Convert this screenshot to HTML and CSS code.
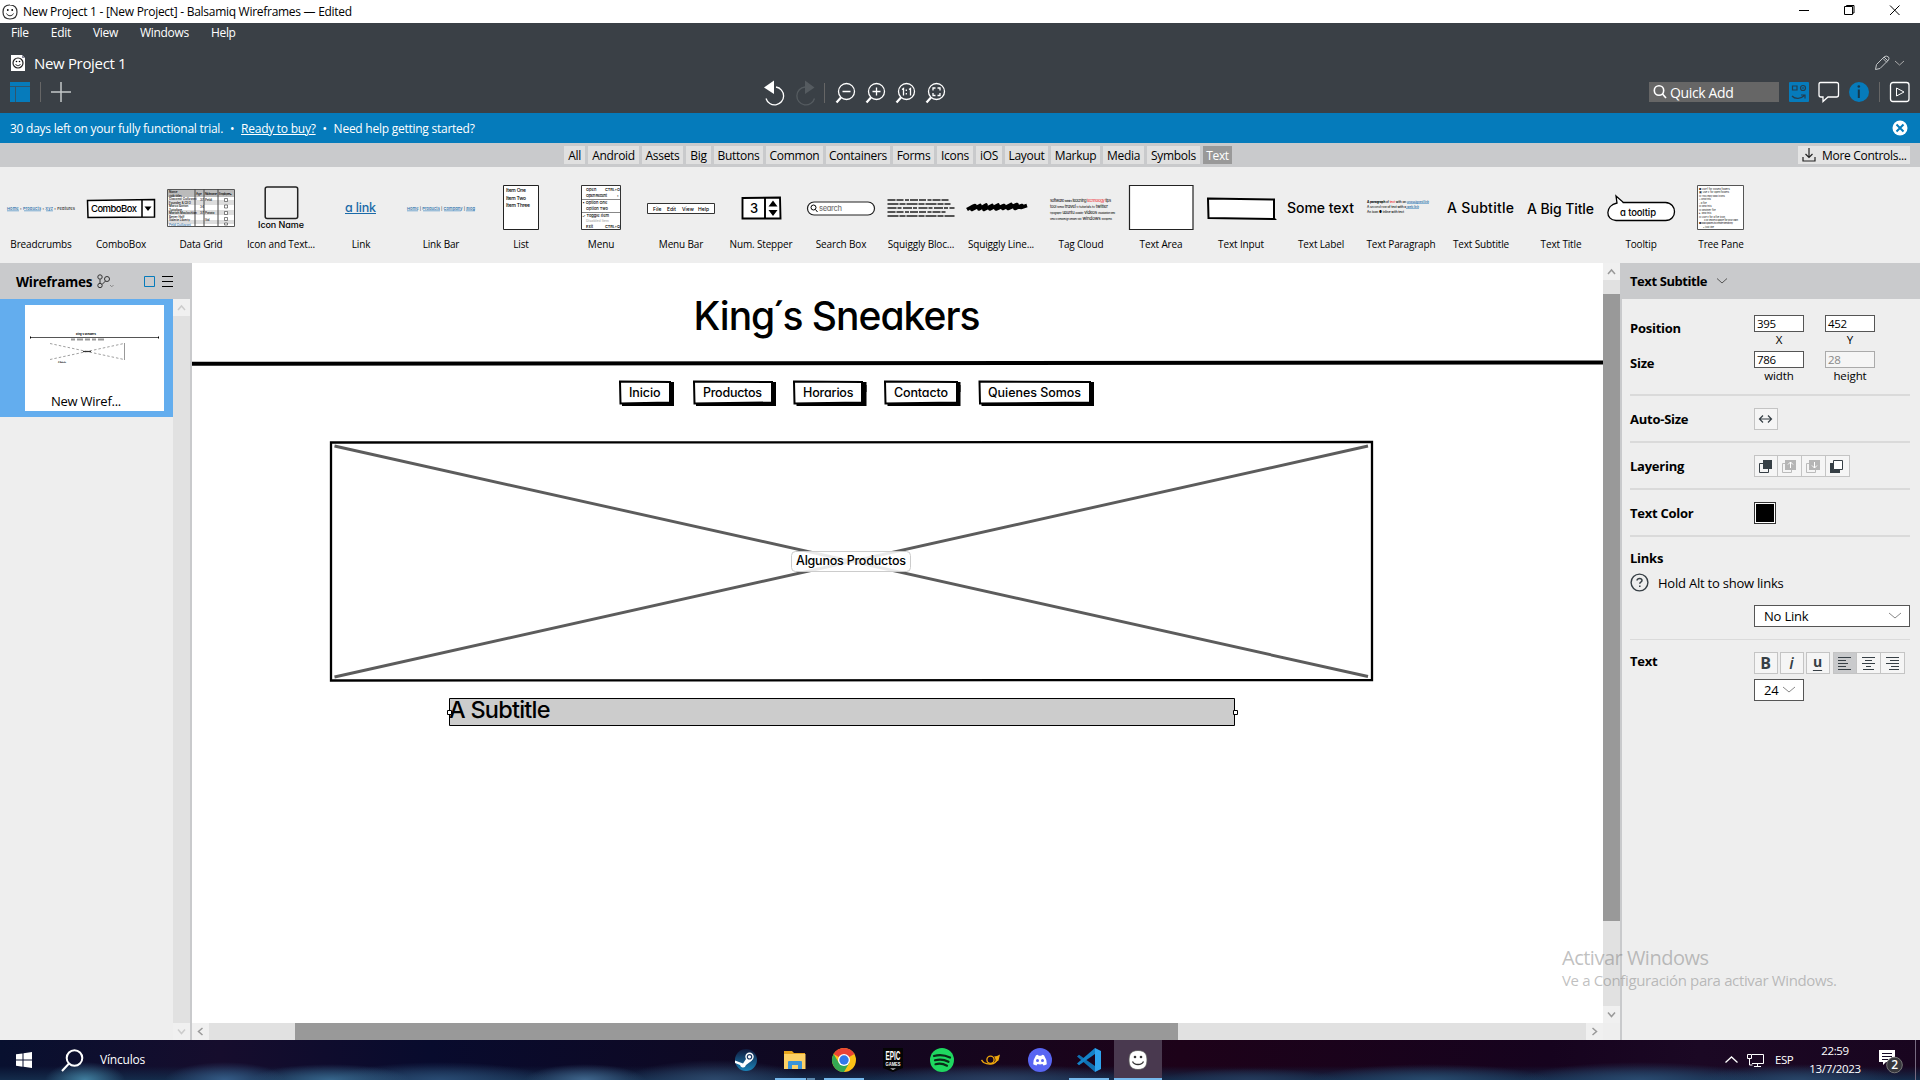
FILE: index.html
```html
<!DOCTYPE html>
<html lang="en">
<head>
<meta charset="utf-8">
<title>New Project 1 - Balsamiq Wireframes</title>
<link rel="stylesheet" href="styles.css">
</head>
<body>
<div class="app">
  <header class="titlebar">
    <svg class="logo" width="16" height="16" viewBox="0 0 16 16"><path d="M8 1C3 .8 1 4 1 8s2 7 7 7 7-3 7-7-2-7-7-7z" fill="#fff" stroke="#333" stroke-width="1.2"/><path d="M4.500 9.500c1.500 3 5.500 3 7 0" fill="none" stroke="#333" stroke-width="1"/><circle cx="5.800" cy="6" r=".9"/><circle cx="10.200" cy="6" r=".9"/></svg>
    <span class="title-text">New Project 1 - [New Project] - Balsamiq Wireframes — Edited</span>
    <svg class="winctl" width="120" height="23" viewBox="0 0 120 23" fill="none" stroke="#000"><path d="M10 10.500h10M55.500 6.500h8v8h-8zM57.500 6V5.500h7.500v7.500H63.500M101 5.500l9.500 9.500M110.500 5.500L101 15"/></svg>
  </header>

  <div class="dark">
    <nav class="menubar"><span>File</span><span>Edit</span><span>View</span><span>Windows</span><span>Help</span></nav>
    <div class="project">
      <svg width="16" height="18" viewBox="0 0 16 18"><path d="M1 1h11l3 3v13H1z" fill="#fff"/><path d="M12 1v3h3z" fill="#889"/><circle cx="8" cy="9" r="5" fill="none" stroke="#222" stroke-width="1.2"/><path d="M5.500 10c1 2.200 4 2.200 5 0" fill="none" stroke="#222"/><circle cx="6.500" cy="7.500" r=".8"/><circle cx="9.500" cy="7.500" r=".8"/></svg>
      <span class="project-name">New Project 1</span>
      <svg class="pencil" width="32" height="18" viewBox="0 0 32 18" fill="none" stroke="#c4c7c9"><path d="M1.500 15.500l1-5 8-8q2-1 4 .5 1 1.500 0 3l-8.500 8.500zM10 3l4 4M9 4.500l3.800 3.800"/><path d="M21 7l4.500 4L30 7" stroke="#aaa"/></svg>
    </div>
    <div class="toolbar">
      <div class="tool-left">
        <svg width="62" height="22" viewBox="0 0 62 22"><path d="M0 1h20v20H0z" fill="#067bbb"/><path d="M0 5.500h20M5.500 5.500V21" stroke="#31556b"/><path d="M30.500 1v20" stroke="#666"/><path d="M41 11h20M51 1v20" stroke="#c4c7c9" stroke-width="1.500"/></svg>
      </div>
      <div class="tool-mid">
        <svg width="184" height="28" viewBox="0 0 184 28" fill="none" stroke="#fff" stroke-width="1.300">
          <path d="M12 7a9 9 0 1 1-10 11.500"/><path d="M0 7.500L10 .5V14z" fill="#fff" stroke="none"/>
          <g stroke="#555b60"><path d="M41 7a9 9 0 1 0 9.500 11.500"/><path d="M50.500 7.500L41 .5V14z" fill="#555b60" stroke="none"/></g>
          <path d="M60.500 3v20" stroke="#666" stroke-width="1"/>
          <g><circle cx="82.500" cy="11.500" r="8"/><path d="M77 17.500l-4.500 5" stroke-width="2.200"/></g>
          <g><circle cx="112.500" cy="11.500" r="8"/><path d="M107 17.500l-4.500 5" stroke-width="2.200"/></g>
          <g><circle cx="142.500" cy="11.500" r="8"/><path d="M137 17.500l-4.500 5" stroke-width="2.200"/></g>
          <g><circle cx="172.500" cy="11.500" r="8"/><path d="M167 17.500l-4.500 5" stroke-width="2.200"/></g>
          <path d="M78.500 11.500h8M108.500 11.500h8M112.500 7.500v8"/>
          <path d="M138 9.500l1.500-1v7M145 9.500l1.500-1v7M142.300 9.500v1.500M142.300 13v1.500"/>
          <path d="M171.500 8h-2.500v2.500M169 13v2.500h2.500M173.500 8h2.500v2.500M176 13v2.500h-2.500"/>
        </svg>
      </div>
      <div class="tool-right">
        <div class="quick"><svg width="14" height="14" viewBox="0 0 14 14" fill="none" stroke="#fff" stroke-width="1.600"><circle cx="6" cy="5.500" r="4.700"/><path d="M9.500 9l3.500 4"/></svg><span>Quick Add</span></div>
        <svg width="124" height="22" viewBox="0 0 124 22" fill="none" stroke="#fff">
          <rect x="1" y="1" width="20" height="20" rx="1" fill="#067bbb" stroke="none"/><g stroke="#243f50" stroke-width="1.200"><path d="M4.500 5h4.500v4h-4.500z"/><circle cx="15" cy="7" r="2.500"/><path d="M14 7h2M4 15c3 3.500 9 3 13-1M13 14h4v3.500"/></g>
          <path d="M32.500 1.500h16q2 0 2 2V14q0 2-2 2H40l-5 4.500V16h-2q-2 0-2-2V3.500q0-2 1.500-2z" stroke-width="1.300"/>
          <circle cx="71" cy="11" r="10" fill="#067bbb" stroke="none"/><path d="M70.800 8.500v8.500" stroke="#16384c" stroke-width="2"/><circle cx="70.800" cy="5.500" r="1.300" fill="#16384c" stroke="none"/>
          <path d="M91.500 1v20" stroke="#666"/><rect x="102.500" y="1.500" width="18.500" height="19" rx="2.500" stroke-width="1.300"/><path d="M108.500 7l7.500 4-7.500 4z"/>
        </svg>
      </div>
    </div>
  </div>

  <div class="trial">
    <span>30 days left on your fully functional trial.</span><span class="bul">•</span><span class="buy">Ready to buy?</span><span class="bul">•</span><span>Need help getting started?</span>
    <svg class="close" width="16" height="16" viewBox="0 0 16 16"><circle cx="8" cy="8" r="7.500" fill="#fff"/><path d="M4.500 4.500l7 7M11.500 4.500l-7 7" stroke="#067bbb" stroke-width="2"/></svg>
  </div>

  <div class="tabs">
    <div class="tablist"><span>All</span><span>Android</span><span>Assets</span><span>Big</span><span>Buttons</span><span>Common</span><span>Containers</span><span>Forms</span><span>Icons</span><span>iOS</span><span>Layout</span><span>Markup</span><span>Media</span><span>Symbols</span><span class="on">Text</span></div>
    <div class="more"><svg width="14" height="14" viewBox="0 0 14 14" fill="none" stroke="#222" stroke-width="1.200"><path d="M1 9v4h12V9M7 0v9M3.500 6L7 9.500 10.500 6"/></svg><span>More Controls...</span></div>
  </div>

  <div class="palette">
    <figure><svg viewBox="0 0 80 70" class="hand"><text x="6" y="42.500" font-size="4" textLength="68" class="bl">Home <tspan fill="#333">›</tspan> Products <tspan fill="#333">›</tspan> Xyz <tspan fill="#222">› Features</tspan></text><path d="M6 43.800h12M23 43.800h17M45 43.800h7" stroke="#2a7ab8" stroke-width=".6"/></svg><figcaption>Breadcrumbs</figcaption></figure>
    <figure><svg viewBox="0 0 80 70" class="hand"><path d="M6.500 33.500L73.500 32.500V50L7 50.500zM61 33v17" fill="#fff" stroke="#000" stroke-width="1.500"/><path d="M63.500 39.500h7l-3.500 4.500z"/><text x="10" y="44.500" font-size="9.500" textLength="46">ComboBox</text></svg><figcaption>ComboBox</figcaption></figure>
    <figure><svg viewBox="0 0 80 70" class="hand"><path d="M6.500 22.500h67v37h-67z" fill="#fff" stroke="#555"/><path d="M7 33h66v5H7zM7 43h66v5H7zM7 53h66v4H7z" fill="#ddd"/><path d="M7 23h66v7H7z" fill="#bbb"/><path d="M34 22v37M43 22v37M57 22v37" stroke="#444"/><g font-size="3"><text x="8" y="26">Name</text><text x="8" y="29.500">(job title)</text><text x="8" y="33">Giacomo Guilizzoni</text><text x="8" y="36.500">Founder &amp; CEO</text><text x="8" y="40">Marco Botton</text><text x="8" y="43.500">Tuttofare</text><text x="8" y="47">Mariah Maclachlan</text><text x="8" y="50.500">Better Half</text><text x="8" y="54">Valerie Liberty</text><text x="8" y="58.500" class="bl">Peldi Guilizzoni</text><text x="35" y="28">Age</text><text x="44" y="28" textLength="12">Nickname</text><text x="58" y="28" textLength="13">Employee▴</text><text x="39" y="34">37</text><text x="44" y="34">Peldi</text><text x="39" y="40.500">34</text><text x="39" y="47">37</text><text x="44" y="47">Patata</text><text x="44" y="53.500">Val</text></g><path d="M63.500 31.500h3v3h-3zM63.500 38h3v3h-3zM63.500 44.500h3v3h-3zM63.500 50.500h3v3h-3zM63.500 56h3v2h-3z" fill="#fff" stroke="#333" stroke-width=".6"/></svg><figcaption>Data Grid</figcaption></figure>
    <figure><svg viewBox="0 0 80 70" class="hand"><rect x="24.200" y="20" width="32.500" height="31.500" rx="2" fill="#f0f0f0" stroke="#222" stroke-width="1.500"/><text x="17" y="61" font-size="9" textLength="46">Icon Name</text></svg><figcaption>Icon and Text...</figcaption></figure>
    <figure><svg viewBox="0 0 80 70" class="hand"><text x="24" y="44.500" font-size="12.500" textLength="31" class="bl">a link</text><path d="M24 46.500h31" stroke="#1a6aa8"/></svg><figcaption>Link</figcaption></figure>
    <figure><svg viewBox="0 0 80 70" class="hand"><text x="6" y="42.500" font-size="4" textLength="68" class="bl">Home <tspan fill="#333">|</tspan> Products <tspan fill="#333">|</tspan> Company <tspan fill="#333">|</tspan> Blog</text><path d="M6 43.800h11M22 43.800h17M43 43.800h17M65 43.800h9" stroke="#2a7ab8" stroke-width=".6"/></svg><figcaption>Link Bar</figcaption></figure>
    <figure><svg viewBox="0 0 80 70" class="hand"><path d="M22.500 18.500h35v44h-35z" fill="#fff" stroke="#222"/><g font-size="5"><text x="25" y="25" textLength="20">Item One</text><text x="25" y="32.500" textLength="20">Item Two</text><text x="25" y="40" textLength="24">Item Three</text></g></svg><figcaption>List</figcaption></figure>
    <figure><svg viewBox="0 0 80 70" class="hand"><path d="M20.500 18.500h39v44h-39z" fill="#fff" stroke="#333"/><path d="M21 32.500h38M21 45.500h38" stroke="#888"/><g font-size="4"><text x="25" y="24">Open</text><text x="44" y="24" textLength="15">CTRL+O</text><text x="25" y="30" textLength="21">Open Recent</text><text x="56" y="30">›</text><text x="21.500" y="37">• Option One</text><text x="25" y="42.500">Option Two</text><text x="21" y="50">✓ Toggle Item</text><text x="25" y="55" fill="#aaa" font-size="3.500">Disabled Item</text><text x="25" y="61">Exit</text><text x="44" y="61" textLength="15">CTRL+Q</text></g></svg><figcaption>Menu</figcaption></figure>
    <figure><svg viewBox="0 0 80 70" class="hand"><path d="M6.500 36.500h67v10h-67z" fill="#fff" stroke="#333"/><g font-size="5"><text x="12" y="43.500">File</text><text x="26" y="43.500">Edit</text><text x="41" y="43.500">View</text><text x="57" y="43.500">Help</text></g></svg><figcaption>Menu Bar</figcaption></figure>
    <figure><svg viewBox="0 0 80 70" class="hand"><path d="M21.500 31L59 30.500 59.500 51.500 21.500 51.500zM44 31v21" fill="#fff" stroke="#000" stroke-width="1.900"/><path d="M47.500 39.500h9l-4.500-6zM47.500 43h9l-4.500 6z"/><text x="29" y="46" font-size="13">3</text></svg><figcaption>Num. Stepper</figcaption></figure>
    <figure><svg viewBox="0 0 80 70" class="hand"><rect x="6.500" y="35" width="67" height="13" rx="6.500" fill="#fff" stroke="#222" stroke-width="1.200"/><circle cx="12.500" cy="40.500" r="2.500" fill="none" stroke="#000"/><path d="M14.500 42.500l2 2.500" stroke="#000"/><text x="18" y="44" font-size="7.500" textLength="23" fill="#777">search</text></svg><figcaption>Search Box</figcaption></figure>
    <figure><svg viewBox="0 0 80 70" class="hand"><path d="M6.500 33h61" class="sq"/><path d="M6.500 37h63" class="sq s2"/><path d="M6.500 41h67" class="sq s3"/><path d="M6.500 45h58" class="sq"/><path d="M6.500 49h67" class="sq s2"/></svg><figcaption>Squiggly Bloc...</figcaption></figure>
    <figure><svg viewBox="0 0 80 70"><path d="M6 42.500q7-4 8-4l-3 4 8-4-1 3.500 7-4-2 4.500 8-4-2 3.500 8-4-2 4 8-3.500-1 3 8-4-3 4 9-4-2 4 7-3-1 2 6-2" fill="none" stroke="#000" stroke-width="3.600" stroke-linejoin="round"/></svg><figcaption>Squiggly Line...</figcaption></figure>
    <figure><svg viewBox="0 0 80 70" class="hand tags"><g font-size="4"><text x="9" y="35" textLength="61">software <tspan font-size="2.500">statistics</tspan> teaching <tspan fill="#e22">technology</tspan> tips</text><text x="9" y="41" textLength="58">tool <tspan font-size="2.500">toread</tspan> <tspan font-size="4.500">travel</tspan> <tspan font-size="2.500">tv</tspan> <tspan font-size="3.500">tutorials tv</tspan> <tspan font-size="4.500">twitter</tspan></text><text x="9" y="47" textLength="65"><tspan font-size="2.500">typography</tspan> ubuntu <tspan font-size="2.500">usability</tspan> <tspan font-size="4.500">videos</tspan> <tspan font-size="2.500">visualization web</tspan></text><text x="9" y="52.500" textLength="62"><tspan font-size="2.300">web2.0 webdesign webdev wiki</tspan> <tspan font-size="4.500">windows</tspan> <tspan font-size="2.300">wordpress</tspan></text></g></svg><figcaption>Tag Cloud</figcaption></figure>
    <figure><svg viewBox="0 0 80 70"><path d="M8.500 18.500h63.500v44H8.500z" fill="#fff" stroke="#222" stroke-width="1.200"/></svg><figcaption>Text Area</figcaption></figure>
    <figure><svg viewBox="0 0 80 70"><path d="M7 31.500l66 1v19l.5.500-66-1z" fill="#fff" stroke="#000" stroke-width="2"/></svg><figcaption>Text Input</figcaption></figure>
    <figure><svg viewBox="0 0 80 70" class="hand"><text x="6" y="45.500" font-size="14" textLength="67">Some text</text></svg><figcaption>Text Label</figcaption></figure>
    <figure><svg viewBox="0 0 80 70" class="hand"><g font-size="3.200"><text x="6" y="35.500" textLength="62"><tspan font-weight="700">A paragraph</tspan> of <tspan fill="#e22">text</tspan> with an <tspan class="bl">unassigned link</tspan></text><text x="6" y="40.500" textLength="52">A <tspan font-style="italic">second row</tspan> of text with a <tspan class="bl">web link</tspan></text><text x="6" y="45.500" textLength="37">An icon ● inline with text</text></g><path d="M46 36.500h22M45 41.500h13" stroke="#2a7ab8" stroke-width=".5"/></svg><figcaption>Text Paragraph</figcaption></figure>
    <figure><svg viewBox="0 0 80 70" class="hand"><text x="6" y="46" font-size="14" textLength="67">A Subtitle</text></svg><figcaption>Text Subtitle</figcaption></figure>
    <figure><svg viewBox="0 0 80 70" class="hand"><text x="6" y="46.500" font-size="14" textLength="67">A Big Title</text></svg><figcaption>Text Title</figcaption></figure>
    <figure><svg viewBox="0 0 80 70" class="hand"><path d="M15 29l7.500 6.500q-2 0 4 0h38c12 .5 12 18 0 18H15c-11-.5-11-15 1-17.500z" fill="#fff" stroke="#000" stroke-width="1.300"/><text x="19" y="48.500" font-size="9.500" textLength="36">a tooltip</text></svg><figcaption>Tooltip</figcaption></figure>
    <figure><svg viewBox="0 0 80 70" class="hand"><path d="M16.500 18.500h46v44H16.500z" fill="#fff" stroke="#555"/><g font-size="2.500" fill="#333"><text x="18" y="22.500">■ Use f for closed folders</text><text x="18" y="26">▣ Use F for open folders</text><text x="18" y="29.500">□ You may add icons</text><text x="18" y="33">+ and this</text><text x="18" y="36.500">- a file</text><text x="18" y="40">□ and this</text><text x="18" y="43.500">□ another file</text><text x="18" y="47">▸ and this</text><text x="18" y="50.500">□ Use v for a file icon</text><text x="23" y="54" textLength="34">x Or leave a space for your own</text><text x="18" y="57.300" textLength="34">■ add spaces to create hierarchy</text><text x="22" y="60.500">▪ just like</text></g></svg><figcaption>Tree Pane</figcaption></figure>
  </div>

  <main class="main">
    <aside class="left">
      <div class="phead"><b>Wireframes</b>
        <svg width="18" height="15" viewBox="0 0 18 15" fill="none" stroke="#333"><circle cx="3" cy="3" r="2.200"/><circle cx="10" cy="5" r="2.500"/><circle cx="3" cy="11.500" r="2.200"/><path d="M3 5.500v3.500M5 10.500l3.500-3.500"/><path d="M13 11l1.800 1.800L16.500 11" stroke="#888"/></svg>
        <svg class="views" width="30" height="13" viewBox="0 0 30 13" fill="none"><path d="M1.500 1.500h10v10h-10z" stroke="#067bbb"/><path d="M19 1.500h11M19 6.500h11M19 11.500h11" stroke="#000"/></svg>
      </div>
      <div class="lbody">
        <div class="list"><div class="sel"><div class="thumb">
          <svg width="139" height="86" viewBox="0 0 139 86"><text x="51" y="30.300" font-size="2.600" textLength="20" class="tiny">King´s Sneakers</text><path d="M5 32.500h129" stroke="#555"/><path d="M5 31.500h1v2H5zM133 31.500h1v2h-1z"/><path d="M46 34.500h33" stroke="#999" stroke-width="2" stroke-dasharray="4 2 6 2 5 2"/><path d="M25 38.500l74 16M25 54.500l74-16" stroke="#888" stroke-width=".8" stroke-dasharray="2.500 2"/><path d="M99.500 38v17" stroke="#999"/><path d="M58 46.500h8" stroke="#333" stroke-width="1.200"/><text x="33" y="58.300" font-size="1.800" textLength="8" class="tiny">A Subtitle</text></svg>
          <span>New Wiref...</span></div></div></div>
        <div class="vs dim"><svg class="b" viewBox="0 0 17 17"><path d="M5 11l3.500-4L12 11"/></svg><i class="grow"></i><svg class="b" viewBox="0 0 17 17"><path d="M5 6.500l3.500 4 3.500-4"/></svg></div>
      </div>
    </aside>

    <section class="center">
      <div class="crow">
        <div class="canvas">
          <svg width="1411" height="760" viewBox="192 263 1411 760" class="hand">
            <text x="693.500" y="330" font-size="39" textLength="287" class="ttl">King<tspan dx="-2">´</tspan><tspan dx="-2">s</tspan> Sneakers</text>
            <path d="M192 363.800L1603 362.500" stroke="#000" stroke-width="4"/>
            <g fill="#000">
              <path d="M622 385h52v21H622zM696 385h80v21H696zM796.500 385h70v21h-70zM887.500 385h73v21h-73zM981.500 385H1094v21H981.500z"/>
              <path d="M670 382h4v10H670zM772 382h4v10H772zM862 382h4.500v10h-4.500zM956 382h4.500v10h-4.500zM1089 382h5v10h-5z"/>
            </g>
            <g fill="#fff" stroke="#000" stroke-width="2">
              <path d="M620 381.500L670 382V402.500L620.500 403.500zM694 381.500L772 382V402.500L694.500 403.500zM794 381.500L862 382V402.500L794.500 403.500zM885 381.500L957 382V402.500L885.500 403.500zM979.500 381.500L1090 382V402.500L980 403.500z"/>
            </g>
            <g font-size="12.500"><text x="629" y="397" textLength="31.500">Inicio</text><text x="703" y="397" textLength="59">Productos</text><text x="803" y="397" textLength="50.500">Horarios</text><text x="894" y="397" textLength="54">Contacto</text><text x="988" y="397" textLength="93">Quienes Somos</text></g>
            <path d="M331 442.500L1372 442V680L331 680.500z" fill="#fff" stroke="#000" stroke-width="2.300"/>
            <path d="M334.500 446L1368 676.500M334.500 677L1368 446" stroke="#5c5c5c" stroke-width="2.900"/>
            <rect x="791.500" y="551.500" width="119" height="20" rx="4" fill="#fff" fill-opacity=".87" stroke="#ccc"/>
            <text x="796" y="565" font-size="12.500" textLength="110" class="nofeat">Algunos Productos</text>
            <path d="M449.500 698.500h785v27h-785z" fill="#ccc" stroke="#000"/>
            <text x="449" y="717.500" font-size="23.500" textLength="101.500" class="nofeat">A Subtitle</text>
            <path d="M447.500 710.500h4v4h-4zM1233.500 710.500h4v4h-4z" fill="#fff" stroke="#000"/>
          </svg>
        </div>
        <div class="vs"><svg class="b" viewBox="0 0 17 17"><path d="M5 11l3.500-4L12 11"/></svg><i class="vpre"></i><i class="vthumb"></i><i class="grow"></i><svg class="b" viewBox="0 0 17 17"><path d="M5 6.500l3.500 4 3.500-4"/></svg></div>
      </div>
      <div class="hs"><svg class="b" viewBox="0 0 17 17"><path d="M10.500 5l-4 3.500 4 3.500"/></svg><i class="hpre"></i><i class="hthumb"></i><i class="grow"></i><svg class="b" viewBox="0 0 17 17"><path d="M6.500 5l4 3.500-4 3.500"/></svg><i class="corner"></i></div>
    </section>

    <aside class="right">
      <div class="phead"><b>Text Subtitle</b><svg width="12" height="8" viewBox="0 0 12 8"><path d="M1 1.500l5 4.500 5-4.500" fill="none" stroke="#555"/></svg></div>
      <div class="props">
        <div class="sec pos">
          <b>Position</b><label><span class="in">395</span>X</label><label><span class="in">452</span>Y</label>
          <b>Size</b><label><span class="in">786</span>width</label><label><span class="in off">28</span>height</label>
        </div>
        <div class="sec row"><b>Auto-Size</b><div class="btns"><span><svg viewBox="0 0 22 20"><path d="M4.500 10h12M8 6.500L4.500 10 8 13.500M13 6.500l3.500 3.500-3.500 3.500" fill="none" stroke="#363f45" stroke-width="1.200"/></svg></span></div></div>
        <div class="sec row"><b>Layering</b><div class="btns joined">
          <span><svg viewBox="0 0 22 20"><path d="M4.500 7.500h9v9h-9z" fill="none" stroke="#363f45"/><path d="M8 4h9v9H8z" fill="#363f45"/></svg></span>
          <span><svg viewBox="0 0 22 20"><path d="M4.500 7.500h9v9h-9z" fill="none" stroke="#bbb"/><path d="M7 4h11v10H7z" fill="#b5b5b5"/><path d="M12.500 12V6M10 8.500L12.500 6 15 8.500" fill="none" stroke="#fff"/></svg></span>
          <span><svg viewBox="0 0 22 20"><path d="M4.500 7.500h9v9h-9z" fill="none" stroke="#bbb"/><path d="M7 4h11v10H7z" fill="#b5b5b5"/><path d="M12.500 6v6M10 9.500l2.500 2.500L15 9.500" fill="none" stroke="#fff"/></svg></span>
          <span><svg viewBox="0 0 22 20"><path d="M4 7h10v10H4z" fill="#363f45"/><path d="M7.500 4.500h9v9h-9z" fill="#fff" stroke="#363f45"/></svg></span></div></div>
        <div class="sec row"><b>Text Color</b><span class="swatch"></span></div>
        <div class="sec links">
          <b>Links</b>
          <div class="hint"><svg width="19" height="19" viewBox="0 0 19 19"><circle cx="9.500" cy="9.500" r="8.400" fill="none" stroke="#363f45" stroke-width="1.400"/><path d="M7 7.500q.3-2 2.600-2T12 7.300q0 1.200-1.200 1.800-1 .6-1 1.700M9.800 12.400v1.600" fill="none" stroke="#363f45" stroke-width="1.500"/></svg><span>Hold Alt to show links</span></div>
          <div class="select wide"><span>No Link</span><svg width="14" height="8" viewBox="0 0 14 8"><path d="M1 1l6 5 6-5" fill="none" stroke="#888"/></svg></div>
        </div>
        <div class="txt"><b>Text</b><div>
          <div class="btns fmt"><span class="B">B</span><span class="I">i</span><span class="U">u</span>
            <div class="btns joined">
            <span class="act"><svg viewBox="0 0 22 20"><path d="M4 4.500h13M4 7.500h8M4 10.500h10M4 13.500h8M4 16.500h13" stroke="#363f45"/></svg></span>
            <span><svg viewBox="0 0 22 20"><path d="M4 4.500h13M7 7.500h7M4 10.500h13M8 13.500h5M5 16.500h11" stroke="#363f45"/></svg></span>
            <span><svg viewBox="0 0 22 20"><path d="M4 4.500h13M8 7.500h9M4 10.500h13M9 13.500h8M7 16.500h10" stroke="#363f45"/></svg></span></div></div>
          <div class="select small"><span>24</span><svg width="14" height="8" viewBox="0 0 14 8"><path d="M1 1l6 5 6-5" fill="none" stroke="#888"/></svg></div>
        </div></div>
      </div>
    </aside>
  </main>

  <footer class="taskbar">
    <svg class="start" width="16" height="16" viewBox="0 0 16 16" fill="#fff"><path d="M0 2.300L6.500 1.400V7.500H0zM7.500 1.200L16 0v7.500H7.500zM0 8.500h6.500v6.200L0 13.800zM7.500 8.500H16V16l-8.500-1.200z"/></svg>
    <svg class="find" width="23" height="23" viewBox="0 0 23 23" fill="none" stroke="#fff" stroke-width="2"><circle cx="13.500" cy="9" r="7.800"/><path d="M8 14.500L1 22"/></svg>
    <span class="vinc">Vínculos</span>
    <div class="apps">
      <span><svg viewBox="0 0 24 24"><defs><linearGradient id="st" x1="0" y1="0" x2="0" y2="1"><stop offset="0" stop-color="#10193c"/><stop offset="1" stop-color="#1b83b8"/></linearGradient></defs><circle cx="12" cy="12" r="11" fill="url(#st)"/><path d="M1 12.500l8 3 4-6 5 3-6 4.500q-1 3-3.500 2.500-2-.3-2.500-2.500L1 15z" fill="#fff"/><circle cx="15.500" cy="8.800" r="4.200" fill="#fff"/><circle cx="15.500" cy="8.800" r="2.200" fill="none" stroke="#1b3a66" stroke-width="1.200"/></svg></span>
      <span class="run part"><svg viewBox="0 0 24 24"><path d="M1 3h8l2 2h11v16H1z" fill="#e8a51c"/><path d="M1 6h21.500v15H1z" fill="#fdd165"/><path d="M5 21v-7q0-1 1-1h12q1 0 1 1v7h-4v-4H9v4z" fill="#3b94d9"/></svg></span>
      <span class="run"><svg viewBox="0 0 24 24"><circle cx="12" cy="12" r="12" fill="#fbc116"/><path d="M12 12L1.600 6A12 12 0 0 1 22.400 6z" fill="#ea4335"/><path d="M12 24A12 12 0 0 1 1.600 6L7 15l10.200 0z" fill="#34a853"/><circle cx="12" cy="12" r="6" fill="#fff"/><circle cx="12" cy="12" r="4.700" fill="#3278ea"/></svg></span>
      <span><svg viewBox="0 0 24 24"><path d="M2 0h20v20l-10 4-10-4z" fill="#050505"/><g fill="#fff" class="epic"><text x="4.500" y="12" font-size="12" textLength="15" lengthAdjust="spacingAndGlyphs">EPIC</text><text x="4.500" y="17.500" font-size="4.500" textLength="15" lengthAdjust="spacingAndGlyphs">GAMES</text></g><path d="M9 20.500h6l-3 1.200z" fill="#fff"/></svg></span>
      <span><svg viewBox="0 0 24 24"><circle cx="12" cy="12" r="12" fill="#1fd760"/><path d="M4 8q8-2.500 16 1.500M5 12.300q7-2 13.500 1.500M5.500 16.200q6-1.500 11.500 1.500" fill="none" stroke="#0a2a18" stroke-width="2.200" stroke-linecap="round"/></svg></span>
      <span><svg viewBox="0 0 24 24" fill="none" stroke="#efa70c" stroke-width="1.300"><path d="M2.500 12l2 2.500q3.500 1.800 7.500 1.500 5-.5 6.500-5"/><circle cx="11.500" cy="11.800" r="3.600"/><path d="M15 8.500q3 0 6-2l-1.500 6q-2 .5-3.500 2.500 1.500-3.500-1-6.500z" fill="#efa70c" stroke="none"/></svg></span>
      <span><svg viewBox="0 0 24 24"><circle cx="12" cy="12" r="12" fill="#5865f2"/><path d="M8 7.200l2-.5.6 1h2.800l.6-1 2 .5q3 4.500 2.800 9-1.500 1-3.300 1.300l-1-1.400q-2.500.6-5 0l-1 1.400q-1.800-.3-3.300-1.300Q5 11.700 8 7.200z" fill="#fff"/><circle cx="9.500" cy="12.500" r="1.500" fill="#5865f2"/><circle cx="14.500" cy="12.500" r="1.500" fill="#5865f2"/></svg></span>
      <span class="run"><svg viewBox="0 0 24 24"><path d="M0 8.500l2-1.800L18 18v6z" fill="#1070b3"/><path d="M0 15.500l2 1.800L18 6V0z" fill="#1482c8"/><path d="M18 0l6 3v18l-6 3z" fill="#2ea3ee"/></svg></span>
      <span class="run cur"><svg viewBox="0 0 24 24"><path d="M12 2.500c-7 0-9 4-9 9.500s2 9.500 9 9.500 9-4 9-9.500-2-9.500-9-9.500z" fill="#fff" stroke="#555" stroke-width=".8"/><path d="M6.500 13.500c2 4 9 4 11 0" fill="none" stroke="#333" stroke-width="1.300"/><circle cx="9" cy="9" r="1.300" fill="#333"/><circle cx="15" cy="9" r="1.300" fill="#333"/></svg></span>
    </div>
    <div class="tray">
      <svg width="40" height="16" viewBox="0 0 40 16" fill="none" stroke="#fff"><path d="M.5 10.500l6-5.500 6 5.500" stroke-width="1.300"/><path d="M27 2.500h11.500v9H27M32.500 11.500v3M29 14.500h7M22.500 2.500h4v4h-4zM24.500 6.500v6.500h3"/></svg>
      <span class="esp">ESP</span>
      <div class="clock"><span>22:59</span><span>13/7/2023</span></div>
      <svg class="note" width="25" height="26" viewBox="0 0 25 26"><path d="M0 2h16v12H7l-3 3v-3H0z" fill="#fff"/><path d="M3 5.500h10M3 8.500h10M3 11.500h6" stroke="#140a26"/><circle cx="15.500" cy="17" r="7.800" fill="#37373c" stroke="#777"/><text x="12.200" y="21.200" font-size="12" fill="#fff" font-weight="600">2</text></svg>
    </div>
  </footer>
  <div class="watermark"><div class="w1">Activar Windows</div><div class="w2">Ve a Configuración para activar Windows.</div></div>
</div>
</body>
</html>
```
FILE: styles.css
```css
* { box-sizing: border-box; }
body { margin: 0; font-family: "Open Sans", "Noto Sans", sans-serif; font-size: 12px; color: #000; overflow: hidden; }
.app { width: 1920px; height: 1080px; display: flex; flex-direction: column; background: #eee; position: relative; white-space: nowrap; }
svg { display: block; flex: none; overflow: visible; }

.titlebar { height: 23px; background: #fff; display: flex; align-items: center; padding-left: 2px; flex: none; }
.title-text { margin-left: 5px; font-size: 12px; letter-spacing: -.28px; }
.winctl { margin-left: auto; margin-right: 11px; }

.dark { height: 90px; flex: none; background: #3a4046; color: #fff; display: flex; flex-direction: column; }
.menubar { height: 19px; display: flex; align-items: center; gap: 22px; padding-left: 11px; letter-spacing: -.3px; }
.project { height: 41px; display: flex; align-items: center; padding-left: 10px; }
.project-name { font-size: 15px; margin-left: 8px; letter-spacing: -.33px; }
.pencil { margin-left: auto; margin-right: 14px; }
.toolbar { height: 22px; display: grid; grid-template-columns: 763px 1fr auto; align-items: center; margin-top: -2px; padding: 0 7px 0 10px; }
.tool-left, .tool-right { margin-top: -1px; }
.tool-mid { margin-left: -9px; height: 24px; margin-top: -1px; }
.tool-right { display: flex; gap: 9px; padding-right: 1px; }
.quick { width: 130px; height: 20px; margin-top: 1px; background: #666; display: flex; align-items: center; gap: 3px; padding-left: 4px; font-size: 14px; letter-spacing: -.35px; }

.trial { height: 30px; flex: none; background: #057bbb; color: #fff; display: flex; align-items: center; padding: 0 12px 0 10px; letter-spacing: -.25px; }
.bul { width: 18px; text-align: center; }
.buy { text-decoration: underline; }
.close { margin-left: auto; }

.tabs { height: 24px; flex: none; background: #c9cacc; display: flex; align-items: center; padding: 0 10px 0 564px; }
.tablist { display: grid; grid-template-columns: 21px 51px 41px 25px 49px 57px 64px 41px 36px 26px 43px 49px 41px 53px 29px; gap: 3px; font-size: 12px; letter-spacing: -.3px; }
.tablist span { height: 18px; line-height: 19px; background: #e0e0e0; text-align: center; }
.tablist .on { background: #999; color: #fff; }
.more { margin-left: auto; width: 112px; height: 18px; background: #e4e4e4; display: flex; align-items: center; gap: 6px; padding-left: 4px; letter-spacing: -.3px; }

.palette { height: 96px; flex: none; background: #eee; display: flex; padding-left: 1px; }
.palette figure { width: 80px; margin: 0; }
.palette svg { width: 80px; height: 70px; }
.palette figcaption { text-align: center; font-size: 10px; line-height: 15px; letter-spacing: -.15px; }
.hand { font-family: Inter, sans-serif; font-weight: 450; font-feature-settings: "cv11" 1; }
.tags { font-weight: 400; }
.nofeat { font-feature-settings: normal; }
.ttl { font-weight: 500; }
.bl { fill: #1a6aa8; }
.sq { stroke: #222; stroke-width: 1.700; stroke-dasharray: 8 1 7 1.500 4 1; }
.s2 { stroke-dasharray: 11 1 6 1; }
.s3 { stroke-dasharray: 9 1 4 1.500; }

.main { height: 777px; flex: none; display: flex; }
.left { width: 192px; display: flex; flex-direction: column; border-right: 2px solid #c9cacc; }
.phead { height: 36px; flex: none; background: #c9cacc; display: flex; align-items: center; font-size: 13px; }
.left .phead { padding-left: 16px; gap: 5px; padding-top: 1px; font-size: 13.500px; letter-spacing: -.25px; }
.views { margin-left: auto; margin-right: 17px; }
.lbody { flex: 1; display: flex; }
.list { width: 173px; }
.sel { height: 118px; background: #63adee; padding: 6px 0 0 25px; }
.thumb { width: 139px; height: 106px; background: #fff; display: flex; flex-direction: column; align-items: center; }
.thumb span { font-size: 13px; line-height: 18px; letter-spacing: -.25px; margin-top: 1px; margin-right: 17px; }
.tiny { font-family: Inter, sans-serif; font-weight: 700; }

.vs { width: 17px; flex: none; display: flex; flex-direction: column; background: #e1e1e1; }
.hs { height: 17px; flex: none; display: flex; background: #e1e1e1; }
.b { width: 17px; height: 17px; background: #f0f0f0; fill: none; stroke: #999; stroke-width: 1.500; }
.dim .b { stroke: #ccc; }
.grow { flex: 1; }
.center { width: 1428px; display: flex; flex-direction: column; }
.crow { flex: 1; display: flex; }
.canvas { width: 1411px; background: #fff; }
.vpre { height: 14px; }
.vthumb { height: 627px; background: #999; }
.hpre { width: 86px; }
.hthumb { width: 883px; background: #999; }
.corner { width: 17px; background: #eee; }

.right { width: 300px; border-left: 2px solid #c9cacc; }
.right .phead { padding-left: 8px; gap: 9px; letter-spacing: -.42px; }
.props { padding: 0 10px 0 8px; font-size: 13px; }
.props b { letter-spacing: -.25px; }
.sec { border-bottom: 2px solid #dadada; height: 47px; }
.pos { height: 97px; display: grid; grid-template-columns: 124px 50px 50px; column-gap: 0; grid-template-rows: 36px 36px; padding-top: 16px; }
.pos label { display: flex; flex-direction: column; align-items: center; font-size: 11.500px; line-height: 16px; letter-spacing: -.1px; }
.pos label:nth-of-type(even) { margin-left: 21px; margin-right: -21px; }
.pos b { align-self: start; margin-top: 4px; line-height: 18px; }
.pos b:nth-of-type(2) { margin-top: 3px; }
.in { width: 50px; height: 17px; border: 1px solid #555; background: #fff; padding-left: 2px; line-height: 16px; font-size: 11.500px; letter-spacing: -.3px; }
.in.off { background: #f5f5f5; border-color: #aaa; color: #888; }
.row { display: flex; align-items: center; }
.row b { width: 124px; }
.btns { display: flex; gap: 2px; }
.btns span { width: 24px; height: 22px; border: 1px solid #c4c4c4; background: #f5f5f5; }
.btns svg { width: 22px; height: 20px; }
.joined { gap: 0; margin-left: 1px; }
.sec .joined { margin-left: 0; }
.joined span + span { border-left: 0; }
.btns .act { background: #c9cacc; }
.fmt .joined span + span svg { margin-left: 1px; }
.swatch { width: 22px; height: 22px; border: 1px solid #333; background: #000; box-shadow: inset 0 0 0 1px #fff; }
.links { height: 103px; border-bottom-width: 1px; padding-top: 12px; }
.links b { display: block; line-height: 18px; }
.hint { display: flex; align-items: center; gap: 9px; height: 19px; margin-top: 6px; letter-spacing: -.22px; }
.select { border: 1px solid #555; background: #fff; height: 22px; display: flex; align-items: center; justify-content: space-between; padding: 0 7px 0 9px; letter-spacing: -.2px; }
.wide { width: 156px; margin: 13px 0 0 124px; }
.small { width: 50px; margin-top: 5px; }
.txt { display: flex; padding-top: 12px; }
.txt b { width: 124px; line-height: 18px; }
.fmt > span { text-align: center; line-height: 20px; font-size: 16px; color: #363f45; padding-right: 1px; }
.fmt .B, .fmt .U { font-weight: 700; }
.I { font-style: italic; font-weight: 600; }
.fmt .U { font-size: 14px; line-height: 17px; text-decoration: underline; text-underline-offset: 3px; text-decoration-thickness: 1px; }

.taskbar { height: 40px; flex: none; display: flex; align-items: center; color: #fff; padding-left: 16px;
  background:
    radial-gradient(ellipse 40px 18px at 85px 100%, #417f9f, transparent),
    radial-gradient(ellipse 60px 18px at 225px 100%, #355c87, transparent),
    radial-gradient(ellipse 80px 16px at 330px 100%, #37668c, transparent),
    radial-gradient(ellipse 110px 18px at 440px 100%, #294b73, transparent),
    radial-gradient(ellipse 60px 16px at 585px 100%, #40678d, transparent),
    radial-gradient(ellipse 90px 20px at 715px 100%, #2d496c, transparent),
    radial-gradient(ellipse 130px 16px at 1000px 100%, #2b3f61, transparent),
    radial-gradient(ellipse 90px 12px at 1250px 100%, #253b5c, transparent),
    radial-gradient(ellipse 120px 16px at 1430px 100%, #284b6e, transparent),
    radial-gradient(ellipse 120px 18px at 1640px 100%, #2a4b70, transparent),
    radial-gradient(ellipse 100px 16px at 1800px 100%, #294568, transparent),
    linear-gradient(180deg, transparent 65%, #142c4b),
    linear-gradient(90deg, #08102f, #160d2d 220px, #080b2d 430px, #100821 800px, #1d0219 1180px, #16031e 1550px, #1b0824 1700px, #19051f); }
.find { margin-left: 29px; }
.vinc { margin-left: 16px; margin-top: -1px; font-size: 12px; letter-spacing: -.2px; width: 622px; }
.apps { display: flex; gap: 1px; height: 40px; }
.apps > span { width: 48px; display: flex; align-items: center; justify-content: center; }
.apps svg { width: 24px; height: 24px; }
.run { background: linear-gradient(#76b9ed, #76b9ed) 50% 100% / 40px 2px no-repeat; }
.part { background: linear-gradient(90deg, #76b9ed 31px, #26384f 31px 32px, #5b87ad 32px) 50% 100% / 40px 2px no-repeat; }
.cur { background: linear-gradient(#76b9ed, #76b9ed) 50% 100% / 48px 2px no-repeat, #49394f; }
.epic { font-family: "Liberation Sans", sans-serif; font-weight: 700; }
.tray { margin-left: auto; display: flex; align-items: center; height: 40px; border-right: 1px solid #776a80; margin-right: 4px; }
.esp { margin-left: 10px; width: 20px; font-size: 11.500px; letter-spacing: -.5px; margin-top: -1px; }
.clock { width: 52px; margin-left: 14px; display: flex; flex-direction: column; align-items: center; font-size: 11.500px; line-height: 18px; letter-spacing: -.35px; margin-top: -1px; }
.note { margin-left: 18px; margin-right: 11px; margin-top: 2px; }
.watermark { position: absolute; left: 1562px; top: 944px; color: rgba(130,130,130,.5); }
.w1 { font-size: 20px; line-height: 28px; letter-spacing: -.5px; }
.w2 { font-size: 15px; line-height: 16px; letter-spacing: -.36px; }
```
